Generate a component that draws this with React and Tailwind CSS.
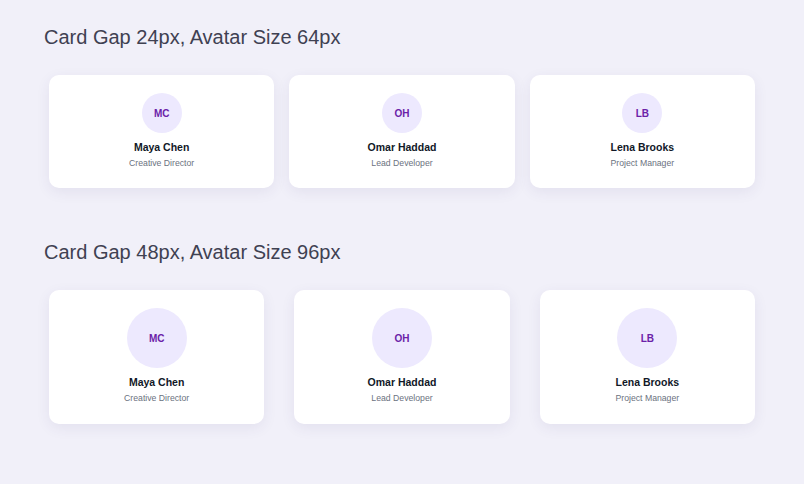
const people = [
  { initials: "MC", name: "Maya Chen", role: "Creative Director" },
  { initials: "OH", name: "Omar Haddad", role: "Lead Developer" },
  { initials: "LB", name: "Lena Brooks", role: "Project Manager" },
];

const Card = ({ person, big }) => {
  return (
    <div
      className={
        big
          ? "bg-white rounded-[10px] shadow-[0_4px_14px_rgba(60,50,120,0.08)] flex flex-col items-center pt-[18px] pb-[20px]"
          : "bg-white rounded-[10px] shadow-[0_4px_14px_rgba(60,50,120,0.08)] flex flex-col items-center pt-[18px] pb-[19px]"
      }
    >
      <div
        className={
          big
            ? "w-[60px] h-[60px] rounded-full bg-[#ede9fe] flex items-center justify-center"
            : "w-[40px] h-[40px] rounded-full bg-[#ede9fe] flex items-center justify-center"
        }
      >
        <span className="text-[10px] font-bold text-[#6b21a8]">{person.initials}</span>
      </div>
      <div className="mt-[7px] text-[10.5px] leading-[14px] font-bold text-[#111827]">{person.name}</div>
      <div className="mt-[3px] text-[8.7px] leading-[12px] text-[#6b7280]">{person.role}</div>
    </div>
  );
};

export default function App() {
  return (
    <div className="min-h-[484px] w-full bg-[#f1f0f9] pt-[25px] pl-[44px] pr-[44px] font-['Liberation_Sans',Arial,sans-serif]">
      <h2 className="text-[20px] leading-[24px] text-[#3f4152]">Card Gap 24px, Avatar Size 64px</h2>
      <div className="mt-[26px] px-[5px] grid grid-cols-3 gap-[15px]">
        {people.map((p) => (
          <Card key={p.initials} person={p} />
        ))}
      </div>

      <h2 className="mt-[52px] text-[20px] leading-[24px] text-[#3f4152]">Card Gap 48px, Avatar Size 96px</h2>
      <div className="mt-[26px] px-[5px] grid grid-cols-3 gap-[30px]">
        {people.map((p) => (
          <Card key={p.initials} person={p} big />
        ))}
      </div>
    </div>
  );
}
